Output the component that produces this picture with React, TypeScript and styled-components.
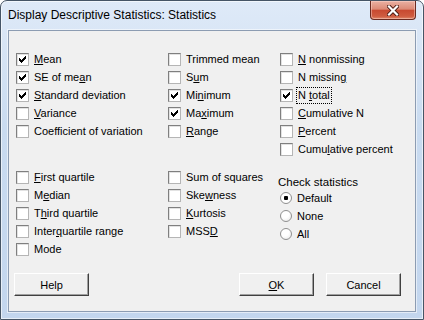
import React from "react";
import styled, { createGlobalStyle } from "styled-components";

type Item = { label: string; checked?: boolean; focused?: boolean };

const group1: Item[][] = [
  [
    { label: "&Mean", checked: true },
    { label: "SE of me&an", checked: true },
    { label: "&Standard deviation", checked: true },
    { label: "&Variance" },
    { label: "Coefficient of variation" },
  ],
  [
    { label: "Trimmed mean" },
    { label: "S&um" },
    { label: "Mi&nimum", checked: true },
    { label: "Ma&ximum", checked: true },
    { label: "&Range" },
  ],
  [
    { label: "&N nonmissing" },
    { label: "N missin&g" },
    { label: "N &total", checked: true, focused: true },
    { label: "&Cumulative N" },
    { label: "&Percent" },
    { label: "Cumu&lative percent" },
  ],
];

const group2: Item[][] = [
  [
    { label: "&First quartile" },
    { label: "M&edian" },
    { label: "T&hird quartile" },
    { label: "Inter&quartile range" },
    { label: "Mode" },
  ],
  [
    { label: "Sum of squares" },
    { label: "Ske&wness" },
    { label: "&Kurtosis" },
    { label: "MSS&D" },
  ],
];

const radios = ["Default", "None", "All"];

// "&" marks the accelerator letter, like a Windows resource string
const Accel = ({ text }: { text: string }) => {
  const i = text.indexOf("&");
  if (i < 0) return <>{text}</>;
  return (
    <>
      {text.slice(0, i)}
      <u>{text[i + 1]}</u>
      {text.slice(i + 2)}
    </>
  );
};

const Check = () => (
  <svg width="7" height="7" viewBox="0 0 7 7" shapeRendering="crispEdges">
    <path
      d="M0 2h1v3H0z M1 3h1v3H1z M2 4h1v3H2z M3 3h1v3H3z M4 2h1v3H4z M5 1h1v3H5z M6 0h1v3H6z"
      fill="#000"
    />
  </svg>
);

const CloseX = () => (
  <svg width="12" height="11" viewBox="0 0 12 11">
    <path d="M2 1.5 L10 9.5 M10 1.5 L2 9.5" stroke="#4a1a12" strokeWidth="4" strokeLinecap="square" />
    <path d="M2 1.5 L10 9.5 M10 1.5 L2 9.5" stroke="#fff" strokeWidth="2.2" strokeLinecap="square" />
  </svg>
);

const App = () => {
  const renderCol = (col: Item[], key: number) => (
    <Column key={key}>
      {col.map((it) => (
        <Row key={it.label}>
          <Box>{it.checked && <Check />}</Box>
          <Label $focused={it.focused}>
            <Accel text={it.label} />
          </Label>
        </Row>
      ))}
    </Column>
  );

  return (
    <>
      <GlobalStyle />
      <Window>
        <TitleBar>
          <Title>Display Descriptive Statistics: Statistics</Title>
          <CloseButton>
            <CloseX />
          </CloseButton>
        </TitleBar>
        <Client>
          <Group>{group1.map(renderCol)}</Group>
          <Group $second>
            {group2.map(renderCol)}
            <RadioColumn>
              <GroupLabel>Check statistics</GroupLabel>
              {radios.map((r, i) => (
                <Row key={r}>
                  <Radio $on={i === 0} />
                  <Label>{r}</Label>
                </Row>
              ))}
            </RadioColumn>
          </Group>
          <ButtonRow>
            <Button>Help</Button>
            <Spacer />
            <Button>
              <Accel text="&OK" />
            </Button>
            <Button>Cancel</Button>
          </ButtonRow>
        </Client>
      </Window>
    </>
  );
};

export default App;

const GlobalStyle = createGlobalStyle`
  body {
    margin: 0;
    background: #fff;
  }
`;

const Window = styled.div`
  width: 424px;
  height: 320px;
  box-sizing: border-box;
  display: flex;
  flex-direction: column;
  padding: 0 7px 7px;
  border: 1px solid #465566;
  border-radius: 7px 7px 0 0;
  background: linear-gradient(#dfeaf8, #c9dbf0 40%, #c3d6ee);
  box-shadow: inset 0 0 0 1px rgba(255, 255, 255, 0.6);
  font-family: "Liberation Sans", Arial, sans-serif;
  color: #000;
`;

const TitleBar = styled.div`
  height: 29px;
  display: flex;
  justify-content: space-between;
  align-items: flex-start;
`;

const Title = styled.div`
  font-size: 12px;
  line-height: 29px;
  color: #000;
  white-space: nowrap;
`;

const CloseButton = styled.div`
  width: 44px;
  height: 18px;
  display: flex;
  align-items: center;
  justify-content: center;
  border: 1px solid #6a2a20;
  border-top: none;
  border-radius: 0 0 4px 4px;
  background: linear-gradient(#eab1a3 0%, #dc8a76 45%, #c84a31 52%, #cf5c40 85%, #e08a6c 100%);
  box-shadow: inset 0 0 0 1px rgba(255, 220, 210, 0.45);
`;

const Client = styled.div`
  flex: 1;
  display: flex;
  flex-direction: column;
  padding-top: 19px;
  background: #f0f0f0;
  border: 1px solid #8c9cb2;
  box-shadow: 0 0 0 1px rgba(255, 255, 255, 0.55);
  font-size: 11px;
`;

const Group = styled.div<{ $second?: boolean }>`
  display: grid;
  grid-template-columns: 152px 112px 1fr;
  align-items: start;
  padding-left: 7px;
  margin-top: ${(p) => (p.$second ? "10px" : "0")};
`;

const Column = styled.div`
  display: flex;
  flex-direction: column;
`;

const Row = styled.div`
  height: 18px;
  display: flex;
  align-items: center;
  gap: 5px;
`;

const Box = styled.div`
  width: 13px;
  height: 13px;
  box-sizing: border-box;
  display: flex;
  align-items: center;
  justify-content: center;
  background: #fff;
  border: 1px solid #8f8f8f;
  border-color: #7f7f7f #b5b5b5 #b5b5b5 #7f7f7f;
  box-shadow: inset 1px 1px 0 #e2e2e2;
`;

const Label = styled.span<{ $focused?: boolean }>`
  white-space: nowrap;
  line-height: 13px;
  outline: ${(p) => (p.$focused ? "1px dotted #000" : "none")};
  outline-offset: 1px;
`;

const RadioColumn = styled.div`
  display: flex;
  flex-direction: column;
  margin-top: 7px;
`;

const GroupLabel = styled.div`
  line-height: 14px;
  margin-left: -2px;
  font-size: 11.5px;
`;

const Radio = styled.div<{ $on?: boolean }>`
  width: 12px;
  height: 12px;
  box-sizing: border-box;
  border-radius: 50%;
  border: 1px solid #8f8f8f;
  background: ${(p) =>
    p.$on
      ? "radial-gradient(circle, #000 0 2px, #fff 2.5px)"
      : "radial-gradient(circle at 40% 35%, #fff 0 40%, #e4e4e4)"};
  display: flex;
  flex-shrink: 0;
`;

const ButtonRow = styled.div`
  display: flex;
  gap: 12px;
  margin-top: 15px;
  padding: 0 14px 0 5px;
`;

const Spacer = styled.div`
  flex: 1;
`;

const Button = styled.div`
  width: 75px;
  height: 23px;
  box-sizing: border-box;
  display: flex;
  align-items: center;
  justify-content: center;
  background: #f0f0f0;
  border: 1px solid;
  border-color: #fff #404040 #404040 #fff;
  box-shadow: inset -1px -1px 0 #a0a0a0;
  font-size: 11px;
`;
